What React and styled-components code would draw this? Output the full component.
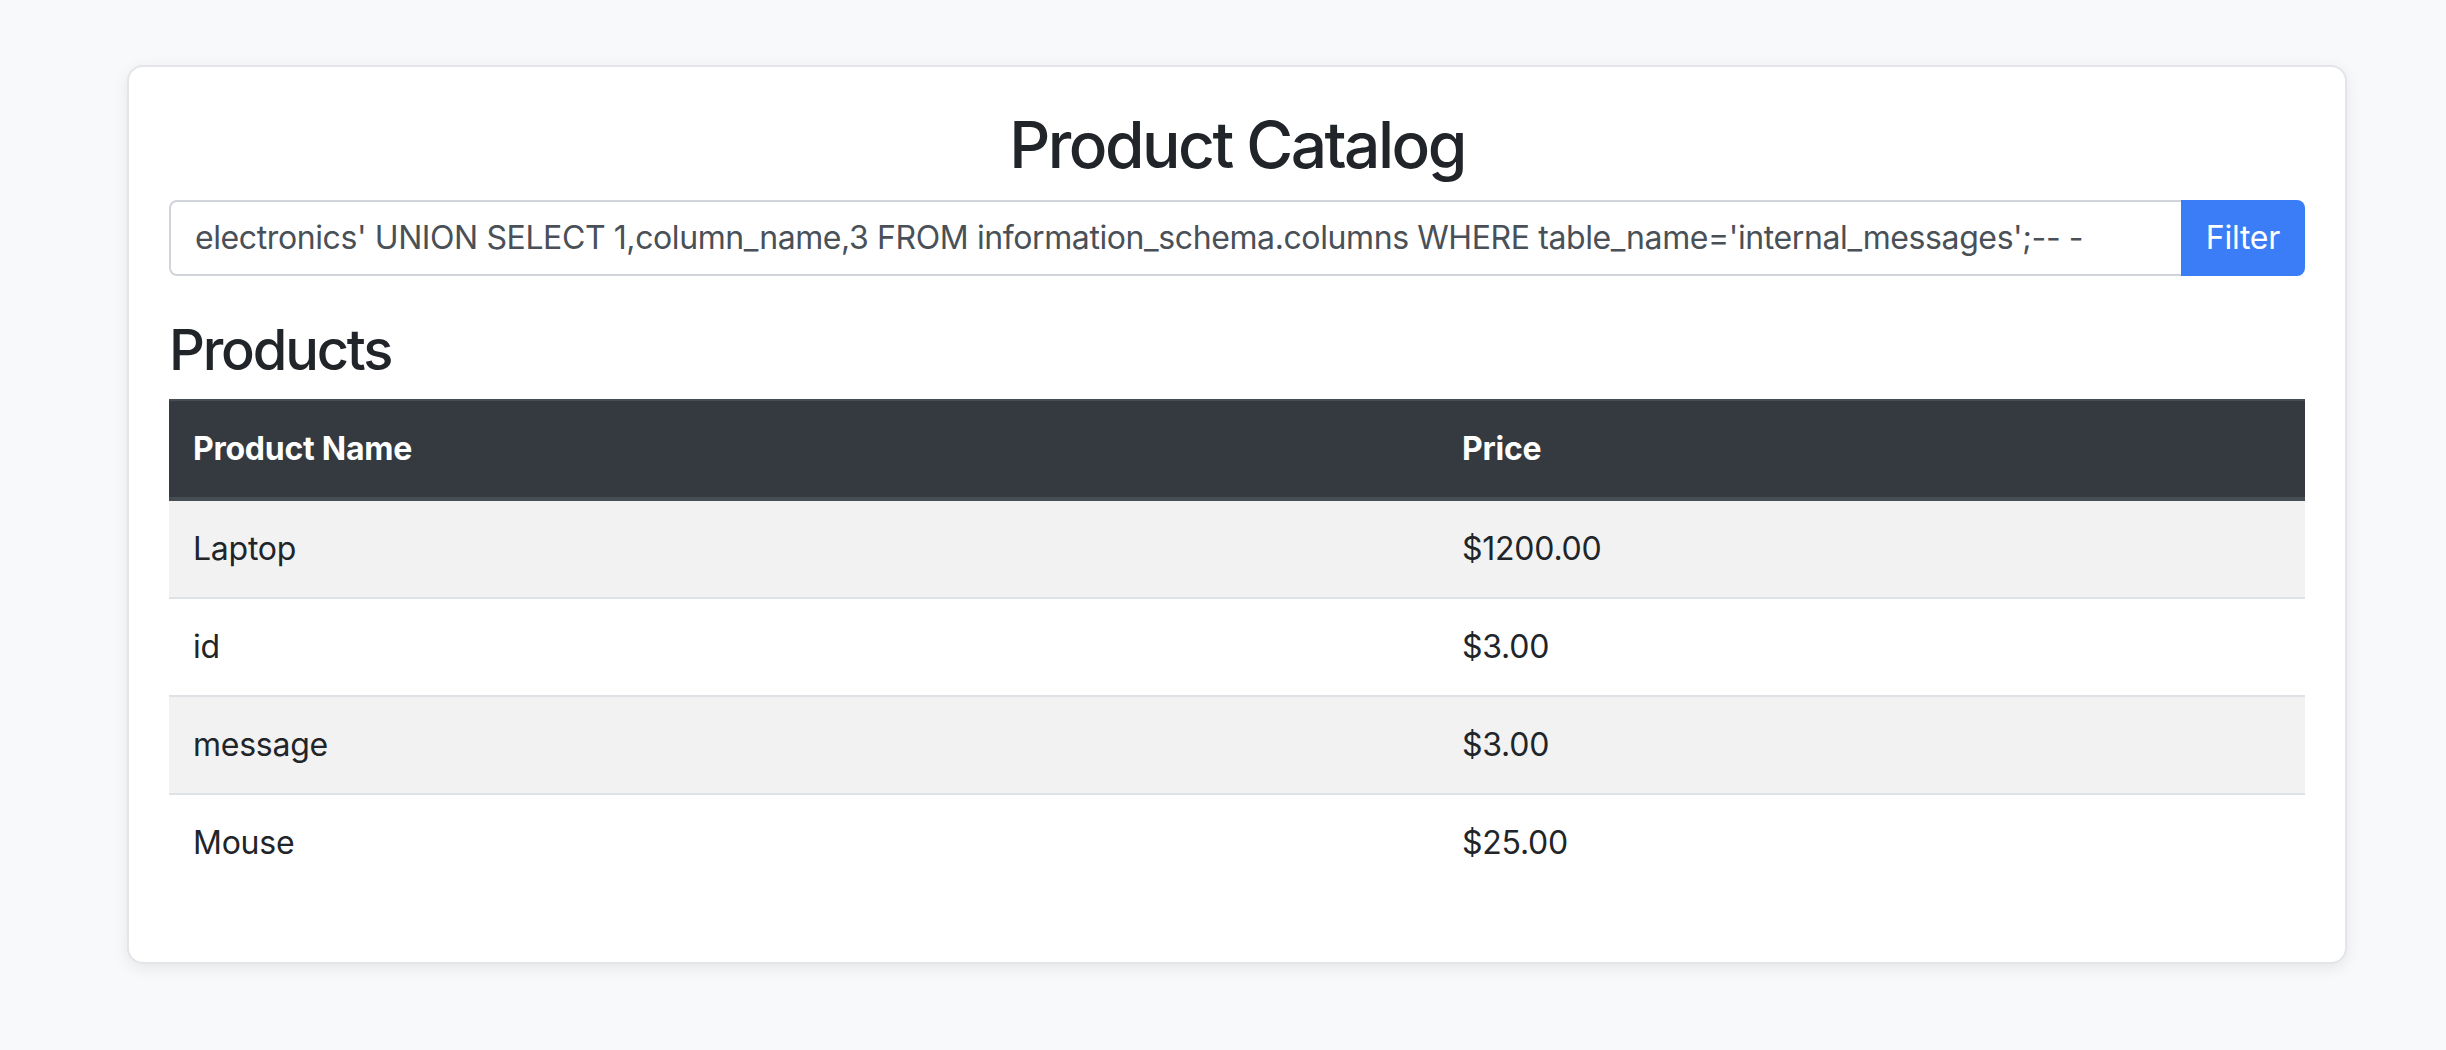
import styled, { createGlobalStyle } from 'styled-components';

const GlobalStyle = createGlobalStyle`
  * {
    box-sizing: border-box;
  }

  body {
    margin: 0;
    background: #f8f9fa;
    color: #212529;
    font-family: Inter, "Noto Sans", "Liberation Sans", sans-serif;
    font-size: 32px;
    line-height: 1.5;
    letter-spacing: -0.25px;
  }
`;

const products = [
  { name: 'Laptop', price: 1200 },
  { name: 'id', price: 3 },
  { name: 'message', price: 3 },
  { name: 'Mouse', price: 25 },
];

const query =
  "electronics' UNION SELECT 1,column_name,3 FROM information_schema.columns WHERE table_name='internal_messages';-- -";

const Page = styled.div`
  min-height: 1050px;
  padding: 65px 0 0 127px;
`;

const Card = styled.div`
  width: 2220px;
  background: #fff;
  border: 2px solid #e3e5e8;
  border-radius: 16px;
  box-shadow: 0 4px 16px rgba(0, 0, 0, 0.08);
  padding: 40px 40px 39px;
`;

const Title = styled.h1`
  margin: 0 0 16px;
  font-size: 64px;
  font-weight: 500;
  line-height: 1.2;
  text-align: center;
  letter-spacing: -2.5px;
`;

const FilterForm = styled.form`
  display: flex;
  margin-bottom: 41px;
`;

const SearchInput = styled.input`
  flex: 1;
  min-width: 0;
  height: 76px;
  padding: 12px 24px;
  font-family: inherit;
  font-size: 32px;
  line-height: 48px;
  letter-spacing: -0.4px;
  color: #495057;
  background: #fff;
  border: 2px solid #d1d5db;
  border-right: none;
  border-radius: 8px 0 0 8px;
  outline: none;
`;

const FilterButton = styled.button`
  height: 76px;
  padding: 12px 25px;
  font-family: inherit;
  font-size: 32px;
  line-height: 48px;
  letter-spacing: inherit;
  color: #fff;
  background: #3b7df6;
  border: none;
  border-radius: 0 8px 8px 0;
  cursor: pointer;
`;

const SectionTitle = styled.h2`
  margin: 0 0 15px;
  font-size: 56px;
  font-weight: 500;
  line-height: 1.2;
  letter-spacing: -2.2px;
`;

const Table = styled.table`
  width: 100%;
  border-collapse: collapse;
  margin-bottom: 32px;
`;

const HeadCell = styled.th`
  width: ${({ $width }) => $width || 'auto'};
  padding: 24px;
  text-align: left;
  font-weight: 700;
  color: #fff;
  background: #343a40;
  border-top: 2px solid #454d55;
  border-bottom: 4px solid #454d55;
`;

const Row = styled.tr`
  background: ${({ $striped }) => ($striped ? '#f2f2f2' : '#fff')};
`;

const Cell = styled.td`
  padding: 24px;
  vertical-align: top;
  border-top: 2px solid #dee2e6;
`;

const formatPrice = (value) => `$${value.toFixed(2)}`;

export default function App() {
  return (
    <>
      <GlobalStyle />
      <Page>
        <Card>
          <Title>Product Catalog</Title>
          <FilterForm onSubmit={(e) => e.preventDefault()}>
            <SearchInput type="text" defaultValue={query} />
            <FilterButton type="submit">Filter</FilterButton>
          </FilterForm>

          <SectionTitle>Products</SectionTitle>
          <Table>
            <thead>
              <tr>
                <HeadCell $width="1269px">Product Name</HeadCell>
                <HeadCell>Price</HeadCell>
              </tr>
            </thead>
            <tbody>
              {products.map((product, index) => (
                <Row key={`${product.name}-${index}`} $striped={index % 2 === 0}>
                  <Cell>{product.name}</Cell>
                  <Cell>{formatPrice(product.price)}</Cell>
                </Row>
              ))}
            </tbody>
          </Table>
        </Card>
      </Page>
    </>
  );
}
